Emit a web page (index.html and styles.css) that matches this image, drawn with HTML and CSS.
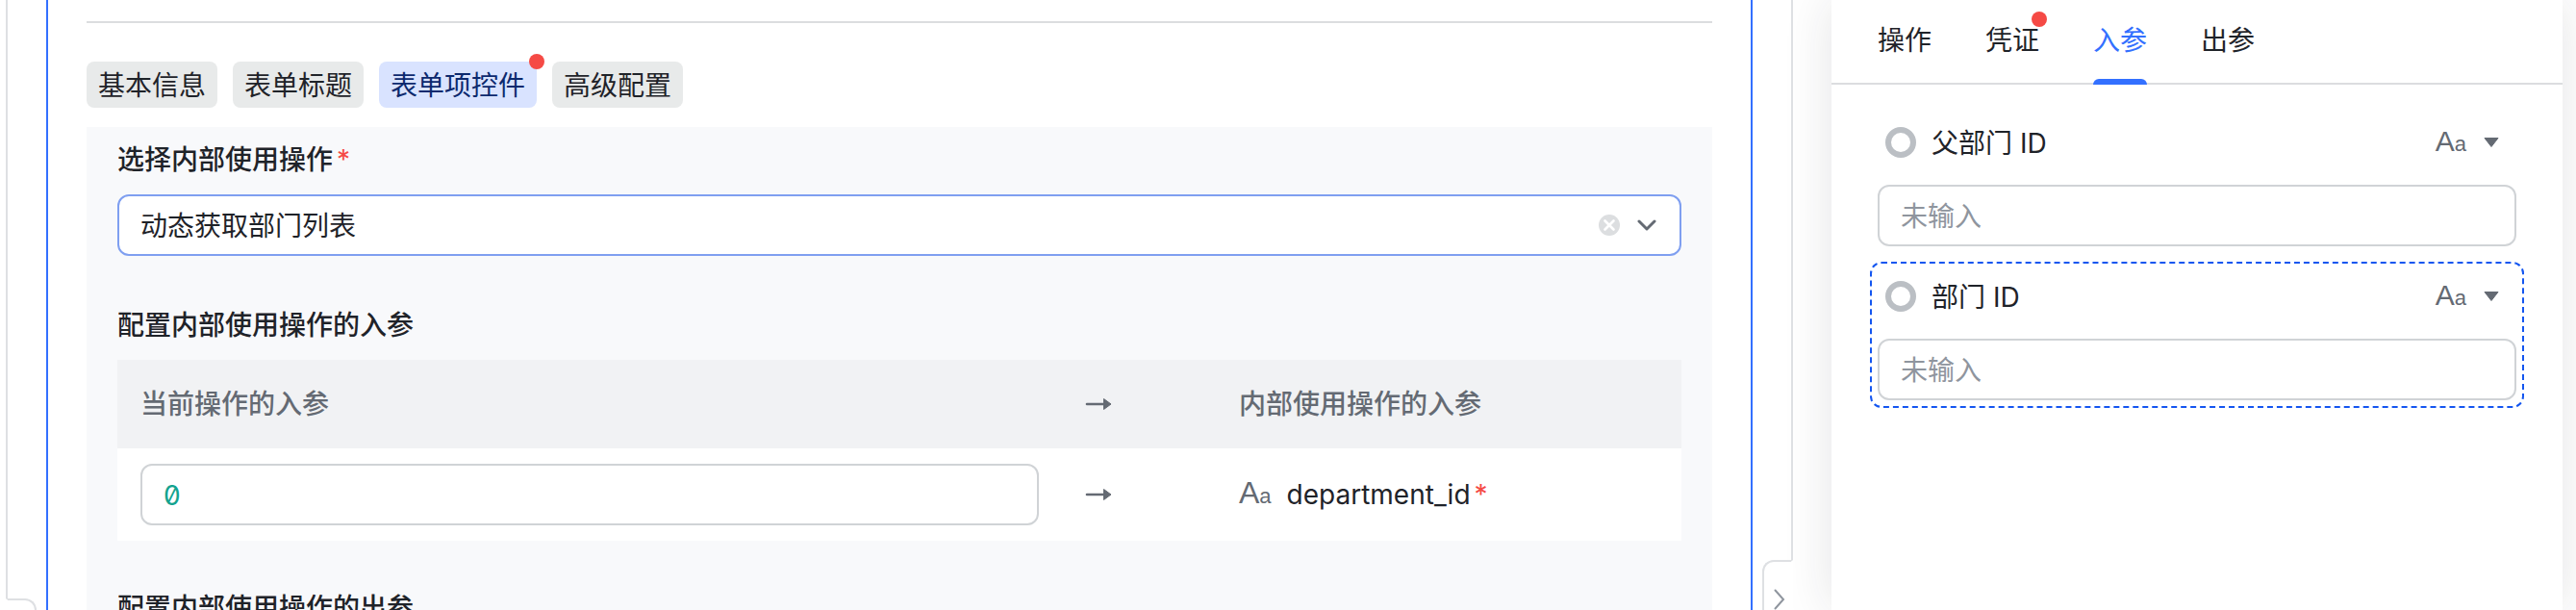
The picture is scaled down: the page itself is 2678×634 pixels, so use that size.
FILE: index.html
```
<!DOCTYPE html>
<html lang="zh-CN">
<head>
    <meta charset="UTF-8">
    <meta name="viewport" content="width=device-width, initial-scale=1.0">
    <title>表单项控件配置</title>
    <link rel="stylesheet" href="styles.css">
</head>
<body>
    <div class="workspace">
        <button class="drawer-toggle drawer-left" aria-label="展开左侧栏"></button>
        <main class="card">
            <nav class="tags">
                <button class="tag">基本信息</button>
                <button class="tag">表单标题</button>
                <button class="tag active">表单项控件<i class="dot"></i></button>
                <button class="tag">高级配置</button>
            </nav>

            <section class="config">
                <label class="title" for="action-select">选择内部使用操作<span class="required">*</span></label>
                <div class="select-box">
                    <select id="action-select">
                        <option>动态获取部门列表</option>
                    </select>
                    <button class="icon-btn" aria-label="清除">
                        <svg width="22" height="22" viewBox="0 0 22 22"><circle cx="11" cy="11" r="11" fill="#dcdee0"/><path d="M6.500 6.500l9 9M15.500 6.500l-9 9" stroke="#fff" stroke-width="2.600" stroke-linecap="round"/></svg>
                    </button>
                    <svg width="20" height="12" viewBox="0 0 20 12"><path d="M2 2l8 8 8-8" fill="none" stroke="#646a73" stroke-width="3" stroke-linecap="round" stroke-linejoin="round"/></svg>
                </div>

                <h3 class="title">配置内部使用操作的入参</h3>
                <table class="mapping">
                    <colgroup><col><col class="col-arrow"><col class="col-target"></colgroup>
                    <thead>
                        <tr>
                            <th>当前操作的入参</th>
                            <th><svg class="arrow" width="28" height="14" viewBox="0 0 28 14"><path d="M2 7h18" stroke="#646a73" stroke-width="2.600" stroke-linecap="round"/><path d="M19.500 1.500l7.500 5.500-7.500 5.500z" fill="#646a73" stroke="#646a73" stroke-linejoin="round"/></svg></th>
                            <th>内部使用操作的入参</th>
                        </tr>
                    </thead>
                    <tbody>
                        <tr>
                            <td><input class="field code" type="text" value="0" aria-label="department_id"></td>
                            <td><svg class="arrow" width="28" height="14" viewBox="0 0 28 14"><path d="M2 7h18" stroke="#646a73" stroke-width="2.600" stroke-linecap="round"/><path d="M19.500 1.500l7.500 5.500-7.500 5.500z" fill="#646a73" stroke="#646a73" stroke-linejoin="round"/></svg></td>
                            <td>
                                <div class="target"><span class="type">A<small>a</small></span><span>department_id<span class="required">*</span></span></div>
                            </td>
                        </tr>
                    </tbody>
                </table>

                <h3 class="title">配置内部使用操作的出参</h3>
            </section>
        </main>
        <button class="drawer-toggle drawer-right" aria-label="收起右侧栏">
            <svg width="12" height="22" viewBox="0 0 12 22"><path d="M1.500 1.500L10 11l-8.500 9.500" fill="none" stroke="#8f959e" stroke-width="2" stroke-linecap="round"/></svg>
        </button>
    </div>

    <aside class="panel">
        <nav class="tabs">
            <button class="tab">操作</button>
            <button class="tab">凭证<i class="dot"></i></button>
            <button class="tab active">入参</button>
            <button class="tab">出参</button>
        </nav>
        <div class="params">
            <div class="param">
                <div class="param-head">
                    <i class="ring"></i>
                    <label for="parent-id">父部门 ID</label>
                    <button class="type-btn" aria-label="选择类型">
                        <span class="type">A<small>a</small></span>
                        <svg width="16" height="12" viewBox="0 0 16 12"><path d="M1 1.500h14L8 10.500z" fill="#646a73" stroke="#646a73" stroke-linejoin="round"/></svg>
                    </button>
                </div>
                <input class="field" id="parent-id" type="text" placeholder="未输入">
            </div>
            <div class="param selected">
                <div class="param-head">
                    <i class="ring"></i>
                    <label for="dept-id">部门 ID</label>
                    <button class="type-btn" aria-label="选择类型">
                        <span class="type">A<small>a</small></span>
                        <svg width="16" height="12" viewBox="0 0 16 12"><path d="M1 1.500h14L8 10.500z" fill="#646a73" stroke="#646a73" stroke-linejoin="round"/></svg>
                    </button>
                </div>
                <input class="field" id="dept-id" type="text" placeholder="未输入">
            </div>
        </div>
    </aside>
</body>
</html>
```

FILE: styles.css
```
* { box-sizing: border-box; margin: 0; padding: 0; }
body {
    display: flex;
    height: 100vh;
    overflow: hidden;
    padding: 0 14px 0 6px;
    background: #fff;
    color: #1f2329;
    font-family: Inter, "Noto Sans CJK SC", sans-serif;
    font-size: 28px;
    line-height: 44px;
}
button, input, select {
    font: inherit;
    color: inherit;
    border: none;
    background: none;
    outline: none;
}
button { cursor: pointer; }
svg { display: block; flex: none; }

.workspace {
    position: relative;
    flex: 1;
    min-width: 0;
    margin-right: 40px;
    padding: 0 40px;
    border: solid #dee0e3;
    border-width: 0 2px;
}
.card {
    height: 100%;
    overflow: hidden;
    padding: 22px 40px 0;
    border: solid #3370ff;
    border-width: 0 2px;
}
.tags {
    display: flex;
    gap: 16px;
    padding: 40px 0 20px;
    border-top: 2px solid #dcdddf;
}
.tag {
    position: relative;
    height: 48px;
    padding: 2px 12px 0;
    border-radius: 8px;
    background: #e8eaea;
}
.tag.active {
    background: #d9e3ff;
    color: #0c296e;
}
.dot {
    position: absolute;
    top: -8px;
    right: -8px;
    width: 16px;
    height: 16px;
    border-radius: 50%;
    background: #f54a45;
}
.config {
    padding: 12px 32px;
    background: #f8f9fb;
}
.title {
    display: block;
    font-size: 28px;
    font-weight: 500;
}
.required {
    margin-left: 4px;
    color: #f54a45;
    font-weight: 400;
}
.select-box {
    display: flex;
    align-items: center;
    height: 64px;
    margin: 14px 0 50px;
    padding: 0 24px 0 22px;
    border: 2px solid #7f9ff0;
    border-radius: 12px;
    background: #fff;
}
.select-box select {
    flex: 1;
    height: 100%;
    padding-top: 2px;
    appearance: none;
}
.icon-btn { margin-right: 18px; }

.mapping {
    width: 100%;
    margin: 14px 0 48px;
    border-collapse: collapse;
    table-layout: fixed;
    background: #fff;
}
.mapping th, .mapping td {
    padding: 0 24px;
    text-align: left;
}
.mapping th {
    height: 92px;
    background: #f1f2f4;
    color: #646a73;
    font-weight: 500;
}
.mapping td { height: 96px; }
.col-arrow { width: 160px; }
.col-target { width: 484px; }
.target {
    display: flex;
    align-items: center;
    gap: 16px;
}
.type {
    color: #646a73;
    font-family: "Liberation Sans", sans-serif;
    font-size: 30px;
}
.type small { font-size: 22px; }
.target .type { font-size: 32px; }

.field {
    display: block;
    width: 100%;
    height: 64px;
    padding: 2px 22px 0;
    border: 2px solid #d0d3d6;
    border-radius: 12px;
    background: #fff;
}
.field::placeholder { color: #8f959e; }
.field.code {
    color: #14a38f;
    font-feature-settings: "zero";
}

.drawer-toggle {
    position: absolute;
    bottom: 0;
    display: flex;
    align-items: center;
    width: 32px;
    border: 2px solid #dee0e3;
    border-bottom: none;
    background: #fff;
}
.drawer-left {
    left: -2px;
    height: 12px;
    border-left-color: #fff;
    border-radius: 0 12px 0 0;
}
.drawer-right {
    right: -2px;
    height: 52px;
    padding: 28px 0 0 10px;
    border-right-color: #fff;
    border-radius: 12px 0 0 0;
}

.panel {
    width: 760px;
    background: #fff;
    box-shadow: 0 0 48px rgba(31, 35, 41, 0.12);
}
.tabs {
    display: flex;
    gap: 56px;
    height: 88px;
    padding: 0 48px;
    border-bottom: 2px solid #dcdddf;
}
.tab {
    position: relative;
    height: 88px;
    padding-bottom: 4px;
}
.tab.active { color: #3370ff; }
.tab.active::after {
    content: "";
    position: absolute;
    left: 0;
    right: 0;
    bottom: 0;
    height: 6px;
    border-radius: 6px 6px 0 0;
    background: #3370ff;
}
.tab .dot { top: 12px; }
.params { padding: 24px 40px; }
.param {
    padding: 6px;
    border: 2px dashed transparent;
    border-radius: 12px;
}
.param + .param { margin-top: 8px; }
.param.selected { border-color: #1456f0; }
.param-head {
    display: flex;
    align-items: center;
    gap: 16px;
    height: 56px;
    margin-bottom: 16px;
    padding: 0 18px 0 8px;
}
.param-head label { padding-top: 2px; }
.ring {
    width: 32px;
    height: 32px;
    border: 6px solid #bbbfc4;
    border-radius: 50%;
}
.type-btn {
    display: flex;
    align-items: center;
    gap: 18px;
    margin-left: auto;
}
```
